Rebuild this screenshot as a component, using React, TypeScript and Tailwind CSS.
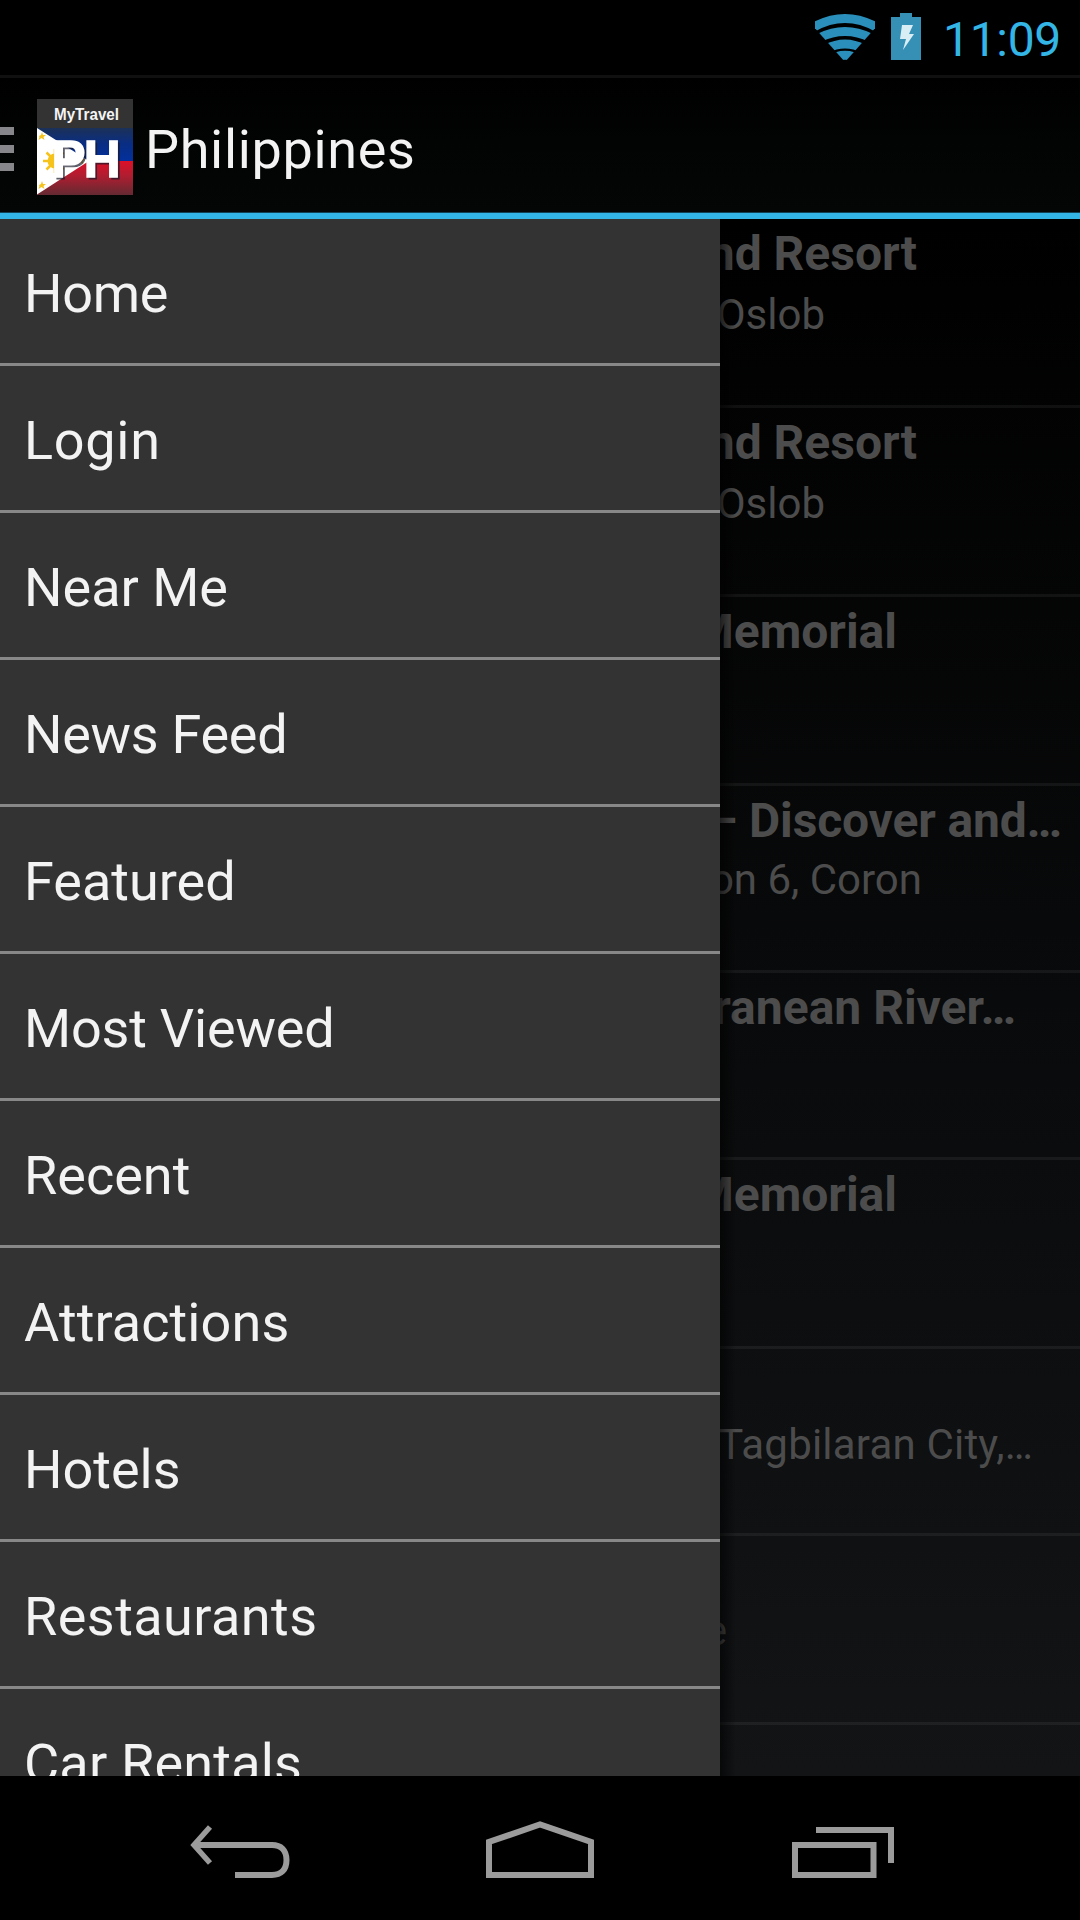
const menu = [
  { label: "Home", track: "tracking-[-0.3px]" },
  { label: "Login", track: "tracking-[0.7px]" },
  { label: "Near Me", track: "tracking-normal" },
  { label: "News Feed", track: "tracking-[-0.3px]" },
  { label: "Featured", track: "tracking-normal" },
  { label: "Most Viewed", track: "tracking-[-0.2px]" },
  { label: "Recent", track: "tracking-normal" },
  { label: "Attractions", track: "tracking-[0.1px]" },
  { label: "Hotels", track: "tracking-normal" },
  { label: "Restaurants", track: "tracking-[0.45px]" },
  { label: "Car Rentals", track: "tracking-[0.2px]" },
];

const places = [
  { h: "h-[189px]", title: "Island Resort", tw: "w-[197px]", sub: "Oslob", sw: "w-[105px]", gap: "mt-px" },
  { h: "h-[189px]", title: "Island Resort", tw: "w-[197px]", sub: "Oslob", sw: "w-[105px]", gap: "mt-px" },
  { h: "h-[189px]", title: "Memorial", tw: "w-[177px]", sub: "", sw: "w-0", gap: "mt-px" },
  { h: "h-[187px]", title: "– Discover and…", tw: "w-[342px] tracking-[-0.15px]", sub: "Barangay Poblacion 6, Coron", sw: "w-[202px]", gap: "-mt-px" },
  { h: "h-[187px]", title: "Subterranean River…", tw: "w-[296px]", sub: "", sw: "w-0", gap: "mt-px" },
  { h: "h-[189px]", title: "Memorial", tw: "w-[177px]", sub: "", sw: "w-0", gap: "mt-px" },
  { h: "h-[187px]", title: "", tw: "w-0", sub: "Tagbilaran City,…", sw: "w-[313px] tracking-[0.2px]", gap: "mt-px" },
  { h: "h-[189px]", title: "", tw: "w-0", sub: "e", sw: "w-[7px]", gap: "mt-0" },
];

function StatusBar() {
  return (
    <div className="flex h-[75px] shrink-0 items-start bg-black pl-[815px] text-[#33b5e5]">
      <svg className="mt-[13px] h-[48px] w-[60px]" viewBox="0 0 60 48">
        <defs>
          <clipPath id="fan"><path d="M30 49 L-1 14 V0 H61 V14 Z" /></clipPath>
        </defs>
        <g clipPath="url(#fan)" fill="none" stroke="#2a8fba" strokeWidth="9">
          <path d="M-3 15 Q30 -4 63 15" />
          <path d="M4 25 Q30 12 56 25" />
          <path d="M11 36 Q30 26 49 36" />
          <path d="M22 43.500 Q30 41 38 43.500" strokeWidth="9" />
        </g>
      </svg>
      <svg className="ml-4 mt-[13px] h-[48px] w-[30px]" viewBox="0 0 30 48">
        <path d="M9 0 H21 V4 H30 V47 H0 V4 H9 Z" fill="#3690b6" />
        <path d="M11 12 H22 L18 21 H23 L12 37 L15 26 H9 Z" fill="#d9edf5" />
      </svg>
      <div className="ml-[22px] mt-[8px] font-[Roboto] text-[48px] leading-[64px] tracking-[-0.3px]">11:09</div>
    </div>
  );
}

function Logo() {
  return (
    <svg className="h-24 w-24" viewBox="0 0 96 96">
      <defs>
        <linearGradient id="blue" x1="0" y1="0" x2="0" y2="1">
          <stop offset="0" stopColor="#1c3157" />
          <stop offset="0.5" stopColor="#082d85" />
          <stop offset="1" stopColor="#03309c" />
        </linearGradient>
        <linearGradient id="red" x1="0" y1="0" x2="0" y2="1">
          <stop offset="0" stopColor="#dc1028" />
          <stop offset="0.4" stopColor="#b41c30" />
          <stop offset="1" stopColor="#642a32" />
        </linearGradient>
      </defs>
      <rect width="96" height="96" fill="#333333" />
      <rect y="29" width="96" height="33" fill="url(#blue)" />
      <rect y="62" width="96" height="34" fill="url(#red)" />
      <path d="M0 29 L52 62 L0 95.500 Z" fill="#ffffff" />
      <g fill="#f6c21c">
        <circle cx="18" cy="62" r="7.500" />
        <path d="M2 37 l2-1 1-3 1 3 h3l-2.500 2 1 3-3-2-3 2 1-3z M2 86 l2-1 1-3 1 3 h3l-2.500 2 1 3-3-2-3 2 1-3z M41 61 l2-1 1-3 1 3 h3l-2.500 2 1 3-3-2-3 2 1-3z" />
      </g>
      <path d="M6 62 H30 M18 50 V74 M9.500 53.500 L26.500 70.500 M26.500 53.500 L9.500 70.500" stroke="#f6c21c" strokeWidth="2.500" />
      <text x="17" y="21" textLength="65" lengthAdjust="spacingAndGlyphs" fill="#f4f4f4" className="font-['Liberation_Sans'] text-[16px] font-bold">MyTravel</text>
      <text x="16.500" y="79.500" fill="#1a1a2a" stroke="#1a1a2a" opacity="0.7" textLength="69" className="font-['Liberation_Sans'] text-[51px] font-bold">PH</text>
      <text x="14.500" y="77.500" fill="#ffffff" stroke="#ffffff" strokeWidth="1.500" textLength="69" className="font-['Liberation_Sans'] text-[51px] font-bold">PH</text>
    </svg>
  );
}

function ActionBar() {
  return (
    <div className="flex h-[144px] shrink-0 items-start border-b-[6px] border-[#33b5e5] bg-[linear-gradient(#000,#040606)] shadow-[inset_0_3px_0_#101010,inset_0_-1px_0_#124254]">
      <div className="mt-[52px] flex w-[14px] flex-col gap-[10px]">
        <div className="h-2 bg-[#86868b]" />
        <div className="h-2 bg-[#86868b]" />
        <div className="h-2 bg-[#86868b]" />
      </div>
      <div className="ml-[23px] mt-6"><Logo /></div>
      <div className="ml-3 mt-[39px] font-[Roboto] text-[54px] leading-[72px] tracking-[0.65px] text-[#f3f3f3]">Philippines</div>
    </div>
  );
}

function NavBar() {
  return (
    <div className="flex h-36 shrink-0 items-start bg-black pl-[190px]">
      <svg className="mt-[44px] h-[60px] w-[102px]" viewBox="190 1820 102 60" fill="none" stroke="#9b9b9b">
        <path d="M196 1845 H272 C281 1845 286.500 1850 286.500 1860 C286.500 1870 281 1875 272 1875 H235" strokeWidth="6" />
        <path d="M210 1827 L194 1845 L210 1863" strokeWidth="5.500" />
      </svg>
      <svg className="ml-[193px] mt-[44px] h-[60px] w-[110px]" viewBox="485 1820 110 60" fill="none" stroke="#9b9b9b" strokeWidth="6">
        <path d="M489 1875 V1842 L540 1824.500 L591 1842 V1875 Z" />
      </svg>
      <svg className="ml-[196px] mt-[44px] h-[60px] w-[104px]" viewBox="791 1820 104 60" fill="none" stroke="#9b9b9b" strokeWidth="6">
        <path d="M795 1845 H873.500 V1875 H795 Z M816 1830 H891 V1863" />
      </svg>
    </div>
  );
}

export default function App() {
  return (
    <div className="flex h-[1920px] w-[1080px] flex-col overflow-hidden bg-black">
      <StatusBar />
      <ActionBar />
      <div className="flex h-[1557px] shrink-0 overflow-hidden">
        <nav className="h-full w-[720px] shrink-0 overflow-hidden bg-[#333333]">
          {menu.map((m) => (
            <div key={m.label} className={`${m.track} h-[147px] border-b-[3px] border-[#888888] pl-6 pt-[3px] font-[Roboto] text-[54px] leading-[144px] text-[#f3f3f3]`}>{m.label}</div>
          ))}
        </nav>
        <div className="relative h-full w-[360px] overflow-hidden bg-[linear-gradient(#000,#121416)]">
          {places.map((p, i) => (
            <div key={i} className={`${p.h} border-b-[3px] border-white/6 pt-[3px] font-[Roboto] text-[#4c4c4c]`}>
              <div className={`${p.tw} flex h-16 justify-end overflow-hidden whitespace-nowrap text-[48px] font-bold leading-[64px]`}>{p.title}</div>
              <div className={`${p.sw} ${p.gap} flex h-14 justify-end overflow-hidden whitespace-nowrap text-[42px] leading-[56px]`}>{p.sub}</div>
            </div>
          ))}
          <div className="absolute inset-y-0 left-0 w-4 bg-gradient-to-r from-black/60 to-transparent" />
        </div>
      </div>
      <NavBar />
    </div>
  );
}
